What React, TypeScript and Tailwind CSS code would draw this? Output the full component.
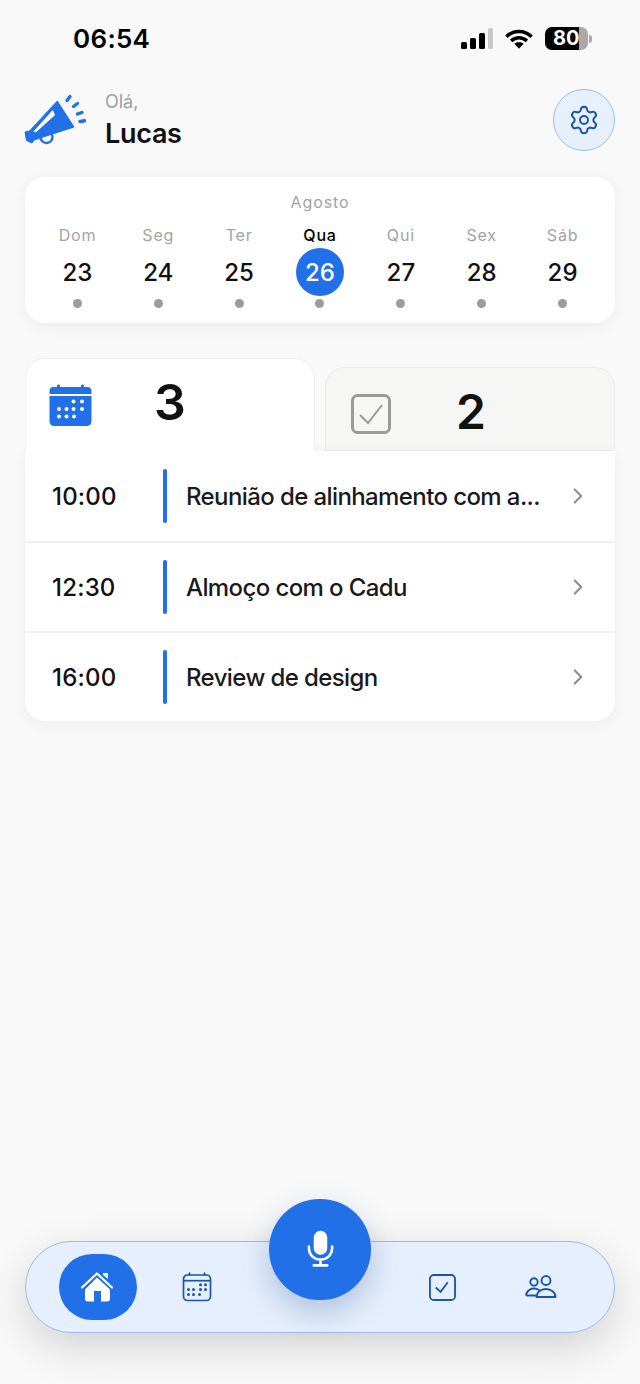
import { ChevronRight, Settings } from "lucide-react"

const days = [
  { name: "Dom", num: "23" },
  { name: "Seg", num: "24" },
  { name: "Ter", num: "25" },
  { name: "Qua", num: "26", active: true },
  { name: "Qui", num: "27" },
  { name: "Sex", num: "28" },
  { name: "Sáb", num: "29" },
]

const events = [
  { time: "10:00", title: "Reunião de alinhamento com a..." },
  { time: "12:30", title: "Almoço com o Cadu" },
  { time: "16:00", title: "Review de design" },
]

const calDots = [
  [24, 17.5], [32.5, 17.5],
  [9.5, 25], [17, 25], [24, 25], [32.5, 25],
  [9.5, 32.5], [17, 32.5], [24.5, 32.5],
]

function Signal() {
  return (
    <svg width="34" height="22" viewBox="0 0 34 22">
      <rect x="1" y="14" width="6" height="7" rx="1.5" fill="#000" />
      <rect x="10" y="10" width="6" height="11" rx="1.5" fill="#000" />
      <rect x="19" y="5" width="6" height="16" rx="1.5" fill="#000" />
      <rect x="28" y="0" width="5" height="21" rx="1.5" fill="#c9c9c9" />
    </svg>
  )
}

function Wifi() {
  return (
    <svg width="28" height="22" viewBox="0 0 30 22" fill="none" stroke="#000" strokeWidth="3.8">
      <path d="M1.5 8.5C9 1 21 1 28.5 8.5" />
      <path d="M6.5 13C11.5 8.5 18.5 8.5 23.5 13" />
      <path d="M15 21.5L10 16C13 14 17 14 20 16Z" fill="#000" stroke="none" />
    </svg>
  )
}

function Battery() {
  return (
    <div className="flex items-center">
      <div className="relative flex h-[23px] w-[43px] overflow-hidden rounded-[7px] bg-[#a9a9a9]">
        <div className="h-full w-[34px] bg-black" />
        <span className="absolute left-[8px] top-[-1px] text-[20px] font-bold leading-[25px] text-white">80</span>
      </div>
      <div className="ml-[1px] h-[8px] w-[3px] rounded-r-full bg-[#a9a9a9]" />
    </div>
  )
}

function Megaphone() {
  return (
    <svg width="64" height="52" viewBox="24 94 64 52">
      <circle cx="46.5" cy="137" r="6" fill="none" stroke="#2170e8" strokeWidth="2.4" />
      <path d="M25 132L29.500 131L57.300 101L74 127L34 140L32 143L26.500 140.500Z" fill="#2170e8" strokeLinejoin="round" stroke="#2170e8" strokeWidth="1" />
      <path d="M33.300 131.700L52.700 110L55 115L36 132.300Z" fill="#fff" />
      <g stroke="#2170e8" strokeWidth="3.400" strokeLinecap="round">
        <path d="M67 100.500L70 96.500" />
        <path d="M73.500 106.500L77.500 103.500" />
        <path d="M77.500 114L82 112.500" />
        <path d="M80 121.500L84.500 120.800" />
      </g>
    </svg>
  )
}

function CalendarFilled() {
  return (
    <svg width="44" height="42" viewBox="0 0 43 42">
      <path d="M0 10V7C0 4.500 1.500 3 4 3H7.500V1.500C7.500 0 10.500 0 10.500 1.500V3H31.500V1.500C31.500 0 34.500 0 34.500 1.500V3H38C40.500 3 42 4.500 42 7V10Z" fill="#2170e8" />
      <path d="M0 12H42V37C42 40 40 42 37 42H5C2 42 0 40 0 37Z" fill="#2170e8" />
      {calDots.map(([x, y], i) => (
        <circle key={i} cx={x} cy={y} r="2" fill="#fff" />
      ))}
    </svg>
  )
}

function CalendarOutline() {
  return (
    <svg width="30" height="30" viewBox="0 0 30 30" fill="none" stroke="#1b55a6" strokeWidth="1.700">
      <rect x="1.500" y="3" width="27" height="25.500" rx="4" />
      <path d="M1.500 8.700H28.500" />
      <path d="M7.500 1V3M22.500 1V3" strokeLinecap="round" />
      {[
        [18.500, 12.700], [23.500, 12.700],
        [6.500, 17.500], [11.500, 17.500], [18.500, 17.500], [23.500, 17.500],
        [6.500, 22.500], [11.500, 22.500], [17.500, 22.500],
      ].map(([x, y], i) => (
        <circle key={i} cx={x} cy={y} r="1.500" fill="#1b55a6" stroke="none" />
      ))}
    </svg>
  )
}

function HomeIcon() {
  return (
    <svg width="36" height="32" viewBox="0 0 36 32" fill="#fff">
      <path d="M23 2H28V8L23 4Z" />
      <path d="M2 16.500L17 2.500L32 16.500" fill="none" stroke="#fff" strokeWidth="2.200" strokeLinecap="round" strokeLinejoin="round" />
      <path d="M17 6.500L30 18.500V27.500C30 29.500 29 30.500 27 30.500H21V20H14V30.500H8C6 30.500 5 29.500 5 27.500V18.500Z" />
    </svg>
  )
}

function People() {
  return (
    <svg width="32" height="26" viewBox="0 0 32 26" fill="none" stroke="#1b55a6" strokeWidth="1.900">
      <circle cx="21" cy="6.500" r="4.500" />
      <circle cx="9" cy="8" r="3.700" />
      <path d="M11.500 23C11.500 18.500 15.500 15 21 15C26 15 30.500 18.500 30.500 23Z" strokeLinejoin="round" />
      <path d="M11.500 21.500H2.500C1 21.500 1 20.500 1.500 19.500C3 16.500 5.500 14.500 9 14.500C11 14.500 12.500 15 14 16" strokeLinecap="round" />
    </svg>
  )
}

function MicIcon() {
  return (
    <svg width="27" height="37" viewBox="0 0 28 38" fill="none" stroke="#fff" strokeWidth="2.600" strokeLinecap="round">
      <rect x="7" y="0.500" width="14" height="25" rx="7" fill="#fff" stroke="none" />
      <path d="M2 17V19C2 25.500 7 30.500 14 30.500C21 30.500 26 25.500 26 19V17" />
      <path d="M14 30.500V36" />
      <path d="M7 36.500H21" />
    </svg>
  )
}

export default function App() {
  return (
    <div className="flex h-[1384px] w-[640px] flex-col overflow-hidden bg-[#f9f9f9] font-['Inter','Liberation_Sans',sans-serif] text-[#111]">
      {/* status bar */}
      <div className="flex h-[89px] items-start justify-between pl-[73px] pr-[48px] pt-[22px]">
        <span className="text-[26px] font-semibold leading-[34px] tracking-[0.3px] text-black">06:54</span>
        <div className="mt-[5px] flex items-center">
          <Signal />
          <div className="ml-[11px]">
            <Wifi />
          </div>
          <div className="ml-[12px]">
            <Battery />
          </div>
        </div>
      </div>

      {/* header */}
      <div className="flex h-[62px] items-center justify-between pl-[24px] pr-[25px]">
        <div className="flex items-center">
          <Megaphone />
          <div className="ml-[17px] flex flex-col">
            <span className="text-[18px] leading-[26px] text-[#a0a0a0]">Olá,</span>
            <span className="mt-[2px] text-[27px] font-semibold leading-[34px] tracking-[-0.3px] text-[#111]">Lucas</span>
          </div>
        </div>
        <button className="flex h-[62px] w-[62px] items-center justify-center rounded-full border border-[#9dbce9] bg-[#e7f0fd]">
          <Settings size={32} strokeWidth={1.500} color="#1b55a6" />
        </button>
      </div>

      {/* calendar */}
      <div className="mx-[25px] mt-[26px] h-[146px] rounded-[20px] bg-white px-[12px] pt-[15px] shadow-[0_3px_16px_rgba(0,0,0,0.06)]">
        <div className="text-center text-[16px] font-normal leading-[20px] tracking-[0.9px] text-[#a3a3a3]">Agosto</div>
        <div className="mt-[13px] grid grid-cols-7">
          {days.map((d) => (
            <div key={d.num} className="flex flex-col items-center">
              <span className={`text-[16px] leading-[20px] tracking-[0.8px] ${d.active ? "font-medium text-black" : "font-normal text-[#a3a3a3]"}`}>{d.name}</span>
              <span
                className={`mt-[3px] flex h-[48px] w-[48px] items-center justify-center rounded-full pt-[1px] text-[24px] font-medium ${
                  d.active ? "bg-[#2170e8] text-white" : "text-[#111]"
                }`}
              >
                {d.num}
              </span>
              <span className="mt-[3px] h-[9px] w-[9px] rounded-full bg-[#9c9c9c]" />
            </div>
          ))}
        </div>
      </div>

      {/* tabs */}
      <div className="mx-[25px] mt-[35px] flex items-end gap-[10px]">
        <div className="relative z-10 flex h-[93px] w-[290px] items-start rounded-t-[20px] border-x border-t border-[#eeeeee] bg-white pl-[23px] pt-[25px]">
          <CalendarFilled />
          <span className="ml-[61px] mt-[-12px] text-[50px] font-semibold leading-[60px] text-[#111]">3</span>
        </div>
        <div className="flex h-[84px] w-[290px] items-start rounded-t-[20px] border border-[#ececec] bg-[#f6f6f5] pl-[25px] pt-[26px]">
          <svg width="40" height="40" viewBox="0 0 40 40" fill="none" stroke="#9a9a9a">
            <rect x="1.500" y="1.500" width="37" height="37" rx="5" strokeWidth="3" />
            <path d="M9 21L17 29L31 11" strokeWidth="2" />
          </svg>
          <span className="ml-[65px] mt-[-12px] text-[48px] font-semibold leading-[60px] text-[#111]">2</span>
        </div>
      </div>

      {/* event list */}
      <div className="mx-[25px] rounded-b-[20px] bg-white shadow-[0_3px_16px_rgba(0,0,0,0.06)]">
        {events.map((e, i) => (
          <div key={e.time} className={`flex h-[90px] items-center pl-[27px] pr-[24px] ${i > 0 ? "border-t-2 border-[#f1f1f1]" : ""}`}>
            <span className="w-[111px] pt-[1px] text-[24px] font-medium leading-[30px] tracking-[0.2px] text-[#111]">{e.time}</span>
            <span className="h-[54px] w-[4px] rounded-full bg-[#2170e8]" />
            <span className="ml-[19px] flex-1 pt-[1px] text-[24px] font-medium leading-[30px] tracking-[-0.6px] text-[#1a1a1a]">{e.title}</span>
            <ChevronRight size={26} strokeWidth={2} color="#8f8f8f" />
          </div>
        ))}
      </div>

      {/* bottom nav */}
      <div className="relative mx-[25px] mb-[51px] mt-auto flex h-[92px] items-center rounded-full border border-[#9dbbe8] bg-[#e6effd] shadow-[0_14px_44px_rgba(0,0,0,0.16)]">
        <div className="ml-[33px] flex h-[66px] w-[78px] items-center justify-center rounded-[34px] bg-[#2170e8]">
          <HomeIcon />
        </div>
        <div className="ml-[45px]">
          <CalendarOutline />
        </div>
        <div className="ml-[217px]">
          <svg width="27" height="27" viewBox="0 0 28 28" fill="none" stroke="#1b55a6" strokeWidth="1.900">
            <rect x="1" y="1" width="26" height="26" rx="4" />
            <path d="M7 14L12 18.500L19.500 8.500" strokeWidth="1.900" />
          </svg>
        </div>
        <div className="ml-[69px]">
          <People />
        </div>
        <button className="absolute left-1/2 top-[-43px] flex h-[101px] w-[102px] -translate-x-1/2 items-center justify-center rounded-full bg-[#2170e8] pb-[2px] shadow-[0_12px_32px_rgba(30,70,140,0.28)]">
          <MicIcon />
        </button>
      </div>
    </div>
  )
}
